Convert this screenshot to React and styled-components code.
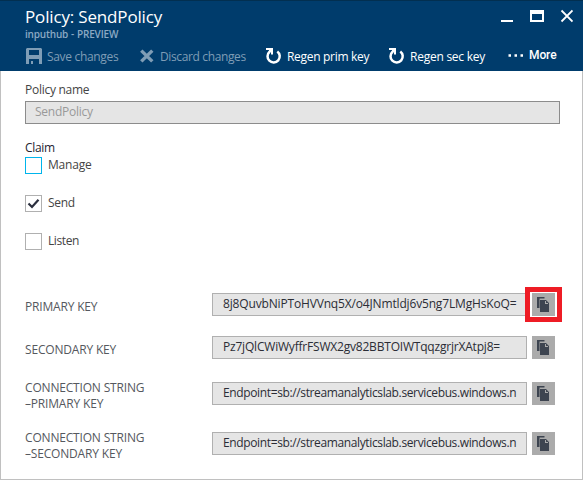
import React from "react";
import styled, { createGlobalStyle } from "styled-components";

const GlobalStyle = createGlobalStyle`
  * { box-sizing: border-box; }
  body { margin: 0; background: #fff; }
`;

const Blade = styled.main`
  width: 583px;
  height: 480px;
  display: flex;
  flex-direction: column;
  overflow: hidden;
  background: #fff;
  color: #3b3b3b;
  font: 12px/16px "Open Sans", "Noto Sans", sans-serif;
`;

const Header = styled.header`
  height: 71px;
  flex: none;
  border-top: 1px solid #022f50;
  background: #003c6c;
  color: #fff;
`;

const HeaderTop = styled.div`
  display: flex;
  justify-content: space-between;
  height: 44px;
  padding: 5px 10px 0 25px;
`;

const Title = styled.h1`
  margin: 0;
  font-size: 17px;
  font-weight: 400;
  line-height: 22px;
  letter-spacing: -0.16px;
`;

const Subtitle = styled.div`
  font-size: 10px;
  font-weight: 600;
  line-height: 12px;
  letter-spacing: -0.18px;
  word-spacing: 0.5px;
  color: #8ba9c4;
`;

const WindowControls = styled.div`
  display: flex;
  padding-top: 3px;
`;

const Toolbar = styled.nav`
  display: flex;
  height: 26px;
  padding: 2px 0 0 25px;
`;

const Command = styled.div`
  display: flex;
  gap: 5px;
  width: ${(p) => p.$width}px;
  letter-spacing: ${(p) => p.$tracking}px;
  color: ${(p) => (p.$disabled ? "#7f9db6" : "#fff")};
  white-space: nowrap;
  svg { flex: none; margin-top: 1px; }
  span { padding-top: 2px; }
`;

const More = styled.div`
  display: flex;
  gap: 5px;
  font: 500 12px/16px Roboto, "Liberation Sans", sans-serif;
  letter-spacing: -0.1px;
`;

const Body = styled.section`
  flex: 1;
  border: 1px solid #c0c0c0;
  border-top: 0;
  padding: 11px 22px 0 24px;
`;

const Label = styled.div`
  letter-spacing: ${(p) => p.$tracking}px;
  color: ${(p) => p.$color || "#444"};
`;

const NameInput = styled.div`
  height: 23px;
  margin: 3px 0 16px;
  padding: 2px 9px;
  border: 1px solid #8c8c8c;
  background: #e5e5e5;
  color: #999;
  letter-spacing: -0.25px;
`;

const Claim = styled.div`
  display: flex;
  gap: 6px;
  height: 38px;
  letter-spacing: ${(p) => p.$tracking}px;
  color: #444;
`;

const CheckBox = styled.div`
  width: 17px;
  height: 17px;
  border: 1px solid ${(p) => (p.$focused ? "#00b5ec" : "#b0b0b0")};
  background: #fff;
  svg { display: block; }
`;

const Claims = styled.div`
  padding-top: 1px;
  height: 137px;
`;

const KeyRow = styled.div`
  display: grid;
  grid-template-columns: 187px 315px 28px;
  align-items: start;
  height: ${(p) => p.$height}px;
`;

const KeyLabel = styled.div`
  margin-top: ${(p) => p.$shift}px;
  color: #55585e;
  letter-spacing: -0.18px;
`;

const KeyValue = styled.div`
  height: 23px;
  padding: 2px 0 0 10px;
  border: 1px solid #b0b0b0;
  background: #e5e5e5;
  color: #2b2d36;
  white-space: nowrap;
  overflow: hidden;
  letter-spacing: ${(p) => p.$tracking}px;
`;

const CopyButton = styled.div`
  position: relative;
  width: 23px;
  height: 23px;
  margin-left: 5px;
  background: #ababab;
  svg { display: block; }
`;

const Highlight = styled.div`
  position: absolute;
  inset: -6px -7px;
  border: 5px solid #ee1c25;
  box-shadow: inset 2px 0 0 #fff, inset -2px 0 0 #fff, inset 0 1px 0 #fff, inset 0 -1px 0 #fff;
`;

const SaveIcon = () => (
  <svg width="17" height="16" viewBox="0 0 17 16">
    <path fill="currentColor" fillRule="evenodd" d="M2 0H16L17 1V16H14V11H4V16H1V1ZM4 2V7H14V2ZM6 13H8V16H6Z" />
  </svg>
);
const DiscardIcon = () => (
  <svg width="16" height="16" viewBox="0 0 16 16">
    <path stroke="currentColor" strokeWidth="3.4" d="M2.3 2.6L13.3 13.4M13.3 2.6L2.3 13.4" />
  </svg>
);
const RegenIcon = () => (
  <svg width="17" height="16" viewBox="0 0 17 16">
    <path fill="none" stroke="#fff" strokeWidth="2.5" d="M12.3 3.5A6.1 6.1 0 1 1 4.6 3.8" />
    <path fill="#fff" d="M1 0H8V6.5H6V4.3L3.6 5.3L4 2H1Z" />
  </svg>
);
const CopyIcon = () => (
  <svg width="23" height="23" viewBox="0 0 23 23">
    <path fill="#3d4450" d="M5 4H12.5V5.5H7.5V15H5Z" />
    <path fill="#3d4450" fillRule="evenodd" d="M8 7H14L17 10V19H8ZM13 8V11H16V10H14V8Z" />
  </svg>
);

const claims = [
  { name: "Manage", tracking: -0.2, focused: true },
  { name: "Send", tracking: -0.3, checked: true },
  { name: "Listen", tracking: -0.4 },
];

const keys = [
  { label: ["PRIMARY KEY"], value: "8j8QuvbNiPToHVVnq5X/o4JNmtldj6v5ng7LMgHsKoQ=", tracking: -0.16, height: 43, shift: 6, marked: true },
  { label: ["SECONDARY KEY"], value: "Pz7jQlCWiWyffrFSWX2gv82BBTOIWTqqzgrjrXAtpj8=", tracking: -0.2, height: 46, shift: 6 },
  { label: ["CONNECTION STRING", "–PRIMARY KEY"], value: "Endpoint=sb://streamanalyticslab.servicebus.windows.n", tracking: -0.37, height: 50, shift: -2 },
  { label: ["CONNECTION STRING", "–SECONDARY KEY"], value: "Endpoint=sb://streamanalyticslab.servicebus.windows.n", tracking: -0.37, height: 30, shift: -2 },
];

export default function App() {
  return (
    <>
      <GlobalStyle />
      <Blade>
        <Header>
          <HeaderTop>
            <div>
              <Title>Policy: SendPolicy</Title>
              <Subtitle>inputhub - PREVIEW</Subtitle>
            </div>
            <WindowControls>
              <svg width="72" height="14" viewBox="0 0 72 14">
                <path fill="#fff" fillRule="evenodd" d="M0 11H12V13H0ZM29 1H43V13H29ZM31 5V11H41V5Z" />
                <path stroke="#fff" strokeWidth="1.8" d="M60.5 1.5L71.5 12.5M71.5 1.5L60.5 12.5" />
              </svg>
            </WindowControls>
          </HeaderTop>
          <Toolbar>
            <Command $disabled $width={114} $tracking={-0.32}><SaveIcon /><span>Save changes</span></Command>
            <Command $disabled $width={126} $tracking={-0.37}><DiscardIcon /><span>Discard changes</span></Command>
            <Command $width={123} $tracking={-0.3}><RegenIcon /><span>Regen prim key</span></Command>
            <Command $width={119} $tracking={-0.25}><RegenIcon /><span>Regen sec key</span></Command>
            <More>
              <svg width="17" height="16" viewBox="0 0 17 16">
                <path fill="#fff" d="M1.5 7.2H4V9.8H1.5ZM7.5 7.2H10V9.8H7.5ZM13.5 7.2H16V9.8H13.5Z" />
              </svg>
              More
            </More>
          </Toolbar>
        </Header>
        <Body>
          <Label $tracking={-0.27}>Policy name</Label>
          <NameInput>SendPolicy</NameInput>
          <Label $tracking={-0.3} $color="#1f2430">Claim</Label>
          <Claims>
            {claims.map((c) => (
              <Claim key={c.name} $tracking={c.tracking}>
                <CheckBox $focused={c.focused}>
                  {c.checked && (
                    <svg width="15" height="15" viewBox="0 0 15 15">
                      <path fill="none" stroke="#2b2f3e" strokeWidth="2.2" d="M2.5 7.5L6 11L12.5 3.7" />
                    </svg>
                  )}
                </CheckBox>
                <span>{c.name}</span>
              </Claim>
            ))}
          </Claims>
          {keys.map((k, i) => (
            <KeyRow key={i} $height={k.height}>
              <KeyLabel $shift={k.shift}>{k.label.map((line) => <div key={line}>{line}</div>)}</KeyLabel>
              <KeyValue $tracking={k.tracking}>{k.value}</KeyValue>
              <CopyButton>
                {k.marked && <Highlight />}
                <CopyIcon />
              </CopyButton>
            </KeyRow>
          ))}
        </Body>
      </Blade>
    </>
  );
}
